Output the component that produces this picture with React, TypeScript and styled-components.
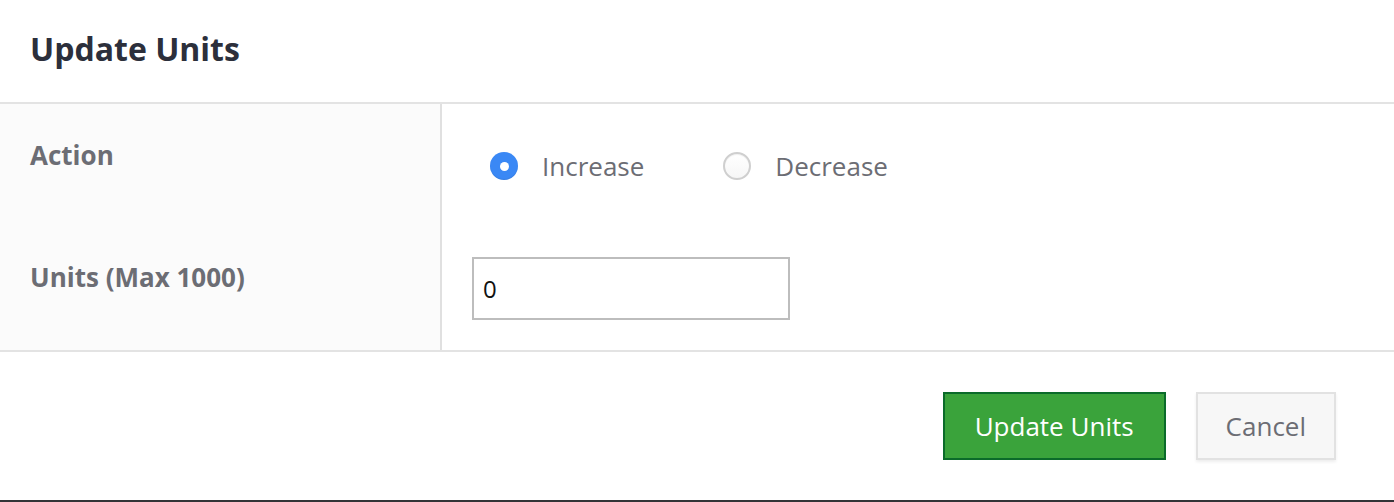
import React from "react";
import styled, { createGlobalStyle } from "styled-components";

const GlobalStyle = createGlobalStyle`
  html, body { margin: 0; padding: 0; background: #ffffff; }
  body { font-family: "Open Sans", "Noto Sans", sans-serif; }
  * { box-sizing: border-box; }
`;

const Modal = styled.div`
  width: 1394px;
  height: 502px;
  display: flex;
  flex-direction: column;
  background: #fff;
  border-bottom: 2px solid #333437;
`;

const Header = styled.div`
  height: 104px;
  padding: 27px 30px 0;
  border-bottom: 2px solid #e3e3e3;
`;

const Title = styled.h2`
  margin: 0;
  font-size: 32px;
  line-height: 44px;
  font-weight: 700;
  color: #2c2f3b;
`;

const Body = styled.div`
  display: flex;
  flex-direction: column;
  border-bottom: 2px solid #e3e3e3;
`;

const Row = styled.div`
  display: grid;
  grid-template-columns: 442px 1fr;
  height: 123px;
`;

const LabelCell = styled.div<{ $top: number }>`
  background: #fbfbfb;
  border-right: 2px solid #e0e0e0;
  padding: ${(p) => p.$top}px 30px 0;
  font-size: 26px;
  line-height: 36px;
  font-weight: 700;
  color: #6c6d74;
`;

const FieldCell = styled.div<{ $top: number; $left: number }>`
  padding: ${(p) => p.$top}px 0 0 ${(p) => p.$left}px;
`;

const RadioGroup = styled.div`
  display: flex;
  align-items: center;
  gap: 79px;
`;

const RadioOption = styled.label`
  display: flex;
  align-items: center;
  gap: 24px;
  font-size: 26px;
  line-height: 36px;
  color: #6c6d74;
  cursor: pointer;
`;

const RadioMark = styled.span<{ $checked: boolean }>`
  width: 28px;
  height: 28px;
  border-radius: 50%;
  display: flex;
  align-items: center;
  justify-content: center;
  flex: none;
  ${(p) =>
    p.$checked
      ? `background: #3a88f5; box-shadow: inset 0 -1px 1px rgba(0,0,0,0.08);`
      : `background: linear-gradient(#ffffff, #f6f6f6); border: 2px solid #cfcfcf; box-shadow: inset 0 1px 1px rgba(0,0,0,0.06);`}
  &::after {
    content: "";
    display: ${(p) => (p.$checked ? "block" : "none")};
    width: 9px;
    height: 9px;
    border-radius: 50%;
    background: #fff;
  }
`;

const UnitsInput = styled.input`
  width: 318px;
  height: 63px;
  border: 2px solid #bdbdbd;
  border-radius: 0;
  padding: 0 9px;
  font-family: "Open Sans", sans-serif;
  font-size: 24px;
  color: #111;
  outline: none;
  background: #fff;
`;

const Footer = styled.div`
  flex: 1;
  display: flex;
  justify-content: flex-end;
  align-items: flex-start;
  gap: 30px;
  padding: 40px 58px 0 0;
`;

const Button = styled.button<{ $primary?: boolean }>`
  height: 68px;
  padding: 0 ${(p) => (p.$primary ? 30 : 28)}px;
  font-family: "Open Sans", sans-serif;
  font-size: 26px;
  cursor: pointer;
  border-radius: 0;
  ${(p) =>
    p.$primary
      ? `background: #3aa33b; border: 2px solid #0b6b2a; color: #ffffff;`
      : `background: #f7f7f7; border: 2px solid #e2e2e2; color: #6c6d74; box-shadow: 0 2px 3px rgba(0,0,0,0.07);`}
`;

export default function App() {
  const [action, setAction] = React.useState<"increase" | "decrease">("increase");
  const [units, setUnits] = React.useState("0");
  return (
    <>
      <GlobalStyle />
      <Modal>
        <Header>
          <Title>Update Units</Title>
        </Header>
        <Body>
          <Row>
            <LabelCell $top={33}>Action</LabelCell>
            <FieldCell $top={44} $left={48}>
              <RadioGroup>
                <RadioOption onClick={() => setAction("increase")}>
                  <RadioMark $checked={action === "increase"} />
                  Increase
                </RadioOption>
                <RadioOption onClick={() => setAction("decrease")}>
                  <RadioMark $checked={action === "decrease"} />
                  Decrease
                </RadioOption>
              </RadioGroup>
            </FieldCell>
          </Row>
          <Row>
            <LabelCell $top={32}>Units (Max 1000)</LabelCell>
            <FieldCell $top={30} $left={30}>
              <UnitsInput value={units} onChange={(e) => setUnits(e.target.value)} />
            </FieldCell>
          </Row>
        </Body>
        <Footer>
          <Button $primary>Update Units</Button>
          <Button>Cancel</Button>
        </Footer>
      </Modal>
    </>
  );
}
